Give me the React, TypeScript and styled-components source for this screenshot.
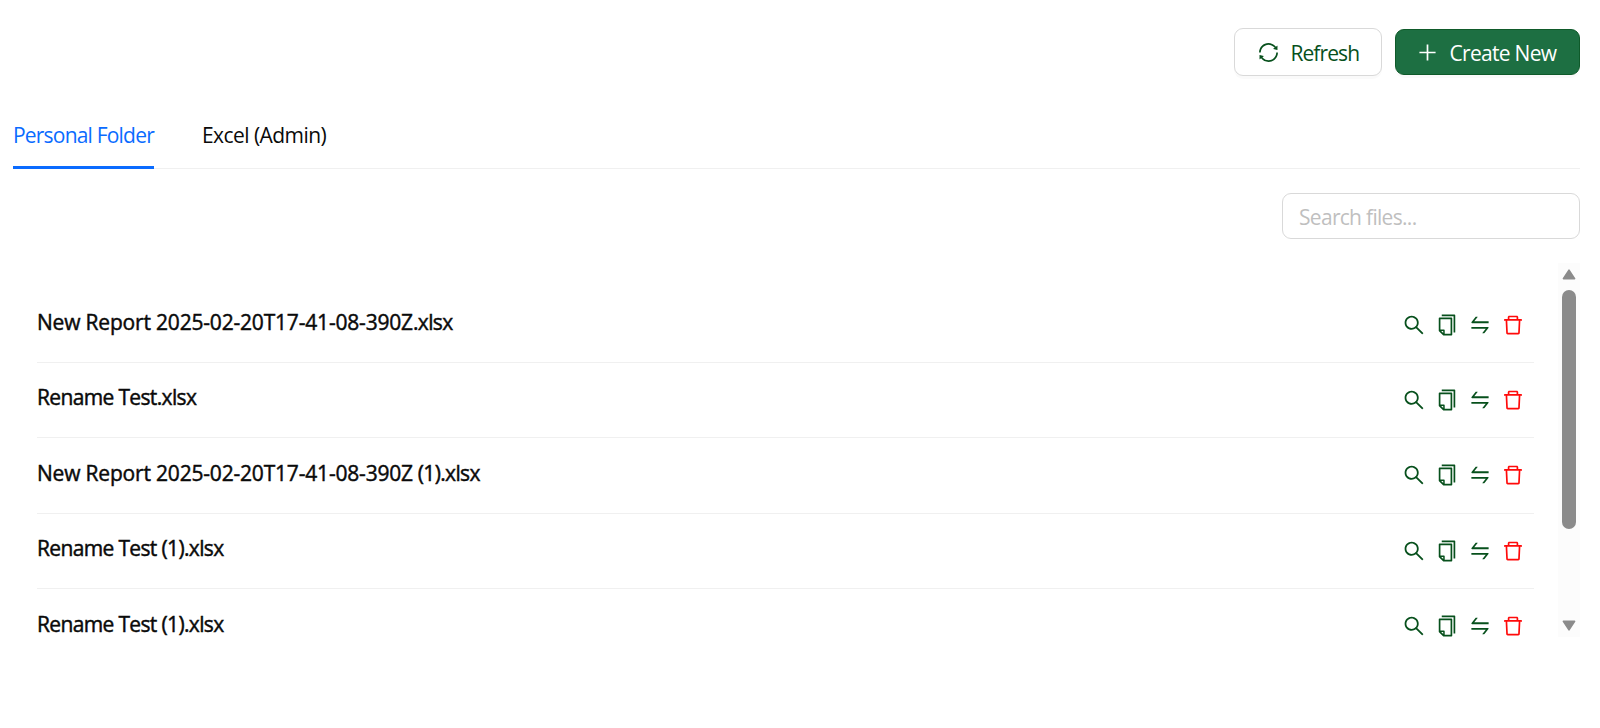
import React, { FC, useState } from 'react';
import styled, { createGlobalStyle } from 'styled-components';
import {
  AiOutlineCopy,
  AiOutlineDelete,
  AiOutlinePlus,
  AiOutlineSearch,
  AiOutlineSwap,
  AiOutlineSync,
} from 'react-icons/ai';

const Palette = {
  green: '#07501c',
  buttonGreen: '#1d6f42',
  buttonEdge: '#0f5a2a',
  blue: '#0a6bff',
  red: '#ff0a0a',
  border: '#d9d9d9',
  divider: '#f0f0f0',
  scroll: '#8b8b8b',
};

const TABS = ['Personal Folder', 'Excel (Admin)'];

const FILES = [
  'New Report 2025-02-20T17-41-08-390Z.xlsx',
  'Rename Test.xlsx',
  'New Report 2025-02-20T17-41-08-390Z (1).xlsx',
  'Rename Test (1).xlsx',
  'Rename Test (1).xlsx',
];

// everything up to the end of an ISO timestamp, which is spaced a bit wider
const STAMPED = /^(.+T[\d-]+Z)/;

const FileRow: FC<{ name: string }> = ({ name }): JSX.Element => (
  <Row>
    <FileName>
      {name.split(STAMPED).map((part, index) =>
        STAMPED.test(part) ? <Stamped key={index}>{part}</Stamped> : part
      )}
    </FileName>
    <Actions>
      <IconButton aria-label="Preview">
        <AiOutlineSearch />
      </IconButton>
      <IconButton aria-label="Copy">
        <AiOutlineCopy />
      </IconButton>
      <IconButton aria-label="Rename">
        <AiOutlineSwap />
      </IconButton>
      <IconButton $danger aria-label="Delete">
        <AiOutlineDelete />
      </IconButton>
    </Actions>
  </Row>
);

const App: FC = (): JSX.Element => {
  const [activeTab, setActiveTab] = useState(TABS[0]);
  const [query, setQuery] = useState('');

  const files = FILES.filter((name) => name.toLowerCase().includes(query.toLowerCase()));

  return (
    <Page>
      <GlobalStyle />
      <Toolbar>
        <RefreshButton>
          <AiOutlineSync />
          <span>Refresh</span>
        </RefreshButton>
        <CreateButton>
          <AiOutlinePlus />
          <span>Create New</span>
        </CreateButton>
      </Toolbar>
      <TabBar>
        {TABS.map((tab) => (
          <Tab key={tab} $active={tab === activeTab} onClick={() => setActiveTab(tab)}>
            {tab}
          </Tab>
        ))}
      </TabBar>
      <SearchRow>
        <SearchInput
          placeholder="Search files..."
          value={query}
          onChange={(e) => setQuery(e.target.value)}
        />
      </SearchRow>
      <ListArea>
        <List>
          {files.map((name, index) => (
            <FileRow key={index} name={name} />
          ))}
        </List>
        <ScrollTrack>
          <ScrollArrow viewBox="0 0 14 11">
            <path d="M7 1.2 12.6 9.6H1.4Z" />
          </ScrollArrow>
          <ScrollThumb />
          <ScrollArrow viewBox="0 0 14 11">
            <path d="M7 9.8 12.6 1.4H1.4Z" />
          </ScrollArrow>
        </ScrollTrack>
      </ListArea>
    </Page>
  );
};

export default App;

const GlobalStyle = createGlobalStyle`
  * {
    box-sizing: border-box;
  }

  body {
    margin: 0;
    background: #fff;
    font-family: 'Open Sans', 'Noto Sans', sans-serif;
    font-size: 21px;
  }

  button, input {
    font: inherit;
  }
`;

const Page = styled.div`
  height: 728px;
  padding: 28px 20px 0 13px;
  overflow: hidden;
`;

const Toolbar = styled.div`
  display: flex;
  justify-content: flex-end;
  gap: 12.5px;
  height: 48px;
`;

const Button = styled.button`
  display: flex;
  align-items: center;
  border-radius: 9px;
  letter-spacing: -0.9px;
  white-space: nowrap;
  cursor: pointer;

  svg {
    flex: none;
    width: 23px;
    height: 23px;
  }
`;

const RefreshButton = styled(Button)`
  width: 148px;
  height: 48px;
  padding: 1px 0 0 22px;
  gap: 10.4px;
  border: 1px solid ${Palette.border};
  background: #fff;
  color: ${Palette.green};
  box-shadow: 0 3px 0 rgba(0, 0, 0, 0.02);
`;

const CreateButton = styled(Button)`
  width: 185.5px;
  height: 46px;
  margin-top: 1px;
  padding: 1px 0 0 20.4px;
  gap: 10.6px;
  border: 1px solid ${Palette.buttonEdge};
  background: ${Palette.buttonGreen};
  color: #fff;
  letter-spacing: -0.7px;
  box-shadow: 0 3px 0 rgba(0, 0, 0, 0.02);
`;

const TabBar = styled.div`
  display: flex;
  gap: 48px;
  height: 93px;
  padding-top: 31px;
  box-shadow: inset 0 -1px 0 ${Palette.divider};
`;

const Tab = styled.button<{ $active: boolean }>`
  height: 62px;
  padding: 0 0 3px;
  border: none;
  border-bottom: 3px solid ${({ $active }) => ($active ? Palette.blue : 'transparent')};
  background: none;
  color: ${({ $active }) => ($active ? Palette.blue : '#0a0a0a')};
  letter-spacing: ${({ $active }) => ($active ? '-0.8px' : '-0.55px')};
  white-space: nowrap;
  cursor: pointer;
`;

const SearchRow = styled.div`
  display: flex;
  justify-content: flex-end;
  padding-top: 24px;
`;

const SearchInput = styled.input`
  width: 298px;
  height: 46px;
  padding: 1px 16px 0;
  border: 1px solid ${Palette.border};
  border-radius: 9px;
  outline: none;
  background: #fff;
  letter-spacing: -0.7px;

  &::placeholder {
    color: #bfbfbf;
    opacity: 1;
  }
`;

const ListArea = styled.div`
  display: flex;
  height: 374px;
  margin-top: 24px;
  overflow: hidden;
`;

const List = styled.div`
  flex: 1;
  padding: 24.6px 24px 0;
`;

const Row = styled.div`
  display: flex;
  align-items: flex-start;
  justify-content: space-between;
  height: 75.4px;
  padding: 21.4px 9.5px 0 0;
  border-bottom: 1px solid ${Palette.divider};

  &:last-child {
    border-bottom: none;
  }
`;

const FileName = styled.span`
  color: #0a0a0a;
  line-height: 26px;
  letter-spacing: -0.65px;
  white-space: nowrap;
  -webkit-text-stroke: 0.45px currentColor;
`;

const Stamped = styled.span`
  letter-spacing: -0.19px;
`;

const Actions = styled.div`
  display: flex;
  gap: 9px;
  padding-top: 3.6px;
`;

const IconButton = styled.button<{ $danger?: boolean }>`
  display: flex;
  padding: 0;
  border: none;
  background: none;
  color: ${({ $danger }) => ($danger ? Palette.red : Palette.green)};
  cursor: pointer;

  svg {
    width: 24px;
    height: 24px;
  }
`;

const ScrollTrack = styled.div`
  display: flex;
  flex-direction: column;
  align-items: center;
  width: 22px;
  padding: 6px 0;
  background: #fcfcfc;
`;

const ScrollArrow = styled.svg`
  flex: none;
  width: 14px;
  height: 11px;
  fill: ${Palette.scroll};
  stroke: ${Palette.scroll};
  stroke-width: 1.6;
  stroke-linejoin: round;
`;

const ScrollThumb = styled.div`
  width: 14px;
  height: 239px;
  margin: 10px 0 auto;
  border-radius: 7px;
  background: ${Palette.scroll};
`;
